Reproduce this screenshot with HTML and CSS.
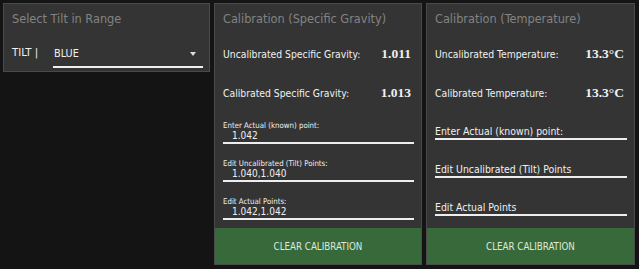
FILE: index.html
```html
<!DOCTYPE html>
<html lang="en">
<head>
    <meta charset="UTF-8">
    <title>Tilt Calibration</title>
    <link rel="stylesheet" href="styles.css">
</head>
<body>
    <div class="grid">
        <div class="panel panel-small">
            <div class="title">Select Tilt in Range</div>
            <div class="tilt-row">
                <span class="tilt-label">TILT |</span>
                <div class="select">
                    <span>BLUE</span>
                    <span class="arrow"></span>
                </div>
            </div>
        </div>

        <div class="panel">
            <div class="title">Calibration (Specific Gravity)</div>
            <div class="rows">
                <div class="row"><span>Uncalibrated Specific Gravity:</span><b>1.011</b></div>
                <div class="row"><span>Calibrated Specific Gravity:</span><b>1.013</b></div>
            </div>
            <div class="field">
                <label>Enter Actual (known) point:</label>
                <div class="value">1.042</div>
            </div>
            <div class="field">
                <label>Edit Uncalibrated (Tilt) Points:</label>
                <div class="value">1.040,1.040</div>
            </div>
            <div class="field">
                <label>Edit Actual Points:</label>
                <div class="value">1.042,1.042</div>
            </div>
            <button class="clear">CLEAR CALIBRATION</button>
        </div>

        <div class="panel">
            <div class="title">Calibration (Temperature)</div>
            <div class="rows">
                <div class="row"><span>Uncalibrated Temperature:</span><b>13.3°C</b></div>
                <div class="row"><span>Calibrated Temperature:</span><b>13.3°C</b></div>
            </div>
            <div class="field empty">
                <div class="placeholder">Enter Actual (known) point:</div>
            </div>
            <div class="field empty">
                <div class="placeholder">Edit Uncalibrated (Tilt) Points</div>
            </div>
            <div class="field empty">
                <div class="placeholder">Edit Actual Points</div>
            </div>
            <button class="clear">CLEAR CALIBRATION</button>
        </div>
    </div>
</body>
</html>
```

FILE: styles.css
```css
body {
    margin: 0;
    background-color: #141414;
    font-family: 'DejaVu Sans Condensed', 'DejaVu Sans', sans-serif;
    color: #f0f0f0;
}
.grid {
    display: grid;
    grid-template-columns: 207px 208px 209px;
    column-gap: 4px;
    padding: 3px;
    align-items: start;
}
.panel {
    background-color: #343434;
    border: 1px solid #4a4a4a;
    padding-top: 5px;
    display: flex;
    flex-direction: column;
    white-space: nowrap;
}
.title {
    height: 20px;
    line-height: 20px;
    font-size: 12.6px;
    color: #838383;
    padding-left: 8px;
}

/* tilt picker */
.tilt-row {
    display: flex;
    align-items: flex-end;
    height: 39px;
    padding: 0 6px 3px 8px;
}
.tilt-label {
    width: 41px;
    font-size: 11.3px;
    line-height: 14px;
    padding-bottom: 8px;
}
.select {
    flex: 1;
    display: flex;
    justify-content: space-between;
    align-items: center;
    height: 27px;
    box-sizing: border-box;
    font-size: 10.8px;
    border-bottom: 2px solid #eee;
    padding-left: 1px;
}
.arrow {
    width: 0;
    height: 0;
    border-left: 3px solid transparent;
    border-right: 3px solid transparent;
    border-top: 4px solid #ddd;
    margin-right: 7px;
}

/* readings */
.rows {
    margin-top: 13px;
    display: flex;
    flex-direction: column;
    gap: 15px;
    padding: 0 10px 0 8px;
}
.row {
    display: flex;
    justify-content: space-between;
    align-items: center;
    height: 24px;
    font-size: 10.3px;
}
.row b {
    font-family: 'Liberation Serif', serif;
    font-size: 13.5px;
}

/* inputs */
.field {
    height: 38px;
    box-sizing: border-box;
    margin: 0 7px 0 8px;
    border-bottom: 2px solid #eee;
    display: flex;
    flex-direction: column;
    justify-content: flex-end;
    padding-bottom: 1px;
}
.rows + .field {
    height: 39px;
}
.field label {
    font-size: 7.8px;
    line-height: 9px;
}
.field .value {
    font-size: 10px;
    line-height: 11px;
    padding-left: 9px;
}
.field.empty {
    padding-bottom: 0;
}
.rows + .field.empty {
    height: 35px;
}
.placeholder {
    font-size: 10.4px;
    line-height: 14px;
}
.clear {
    margin-top: 8px;
    height: 36px;
    border: none;
    background-color: #37693a;
    color: #dfe9dd;
    font-family: 'DejaVu Sans Condensed', 'DejaVu Sans', sans-serif;
    font-size: 9.7px;
}
.field.empty + .field.empty + .field.empty + .clear {
    margin-top: 12px;
}
```
